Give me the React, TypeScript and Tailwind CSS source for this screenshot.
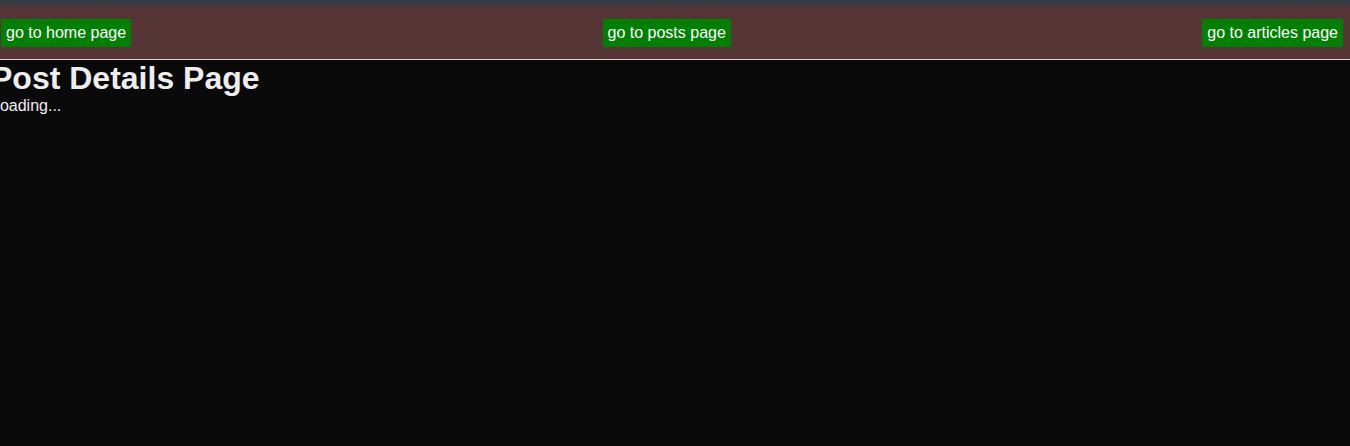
const links = [
  { label: "go to home page", href: "/" },
  { label: "go to posts page", href: "/posts" },
  { label: "go to articles page", href: "/articles" },
];

export default function App() {
  return (
    <div className="min-h-screen bg-[#0a0a0a] text-[#ededed] font-['Liberation_Sans',Arial,sans-serif] overflow-hidden">
      <div className="h-[6px] bg-[#393c44]" />
      <nav className="flex h-[54px] items-center justify-between border-b border-[#d8d8d8] bg-[#553535] pt-[1px] pl-[1px] pr-[7px]">
        {links.map((l) => (
          <a
            key={l.href}
            href={l.href}
            className="flex h-[28px] items-center bg-[#008000] px-[5px] text-[16px] text-white"
          >
            {l.label}
          </a>
        ))}
      </nav>
      <main className="-ml-[9px]">
        <h1 className="text-[32px] font-bold leading-[37px]">Post Details Page</h1>
        <p className="text-[16px] leading-[18px]">Loading...</p>
      </main>
    </div>
  );
}
